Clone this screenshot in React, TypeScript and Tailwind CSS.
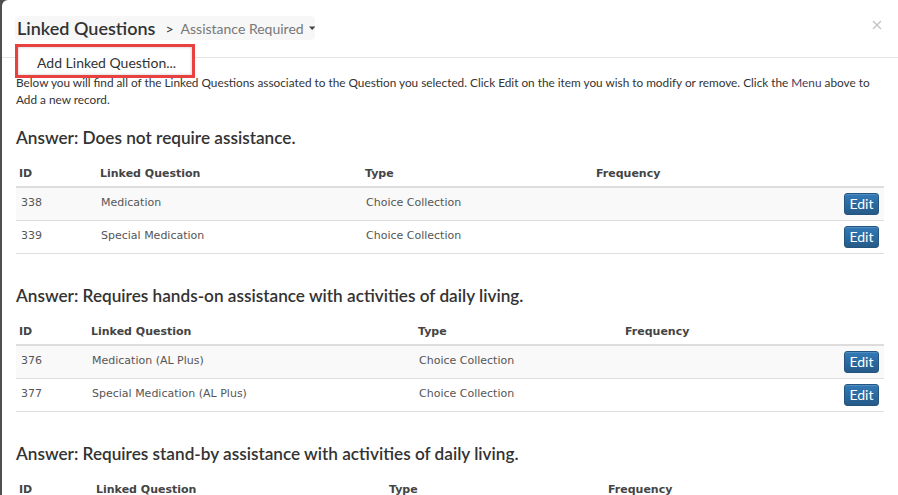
import React from 'react';

interface LinkedRow {
  id: string;
  question: string;
  type: string;
  frequency: string;
}

interface AnswerGroup {
  answer: string;
  // column widths: id, linked question, type
  cols: [string, string, string];
  rows: LinkedRow[];
}

const groups: AnswerGroup[] = [
  {
    answer: 'Answer: Does not require assistance.',
    cols: ['w-[80px]', 'w-[265px]', 'w-[231px]'],
    rows: [
      { id: '338', question: 'Medication', type: 'Choice Collection', frequency: '' },
      { id: '339', question: 'Special Medication', type: 'Choice Collection', frequency: '' },
    ],
  },
  {
    answer: 'Answer: Requires hands-on assistance with activities of daily living.',
    cols: ['w-[71px]', 'w-[327px]', 'w-[207px]'],
    rows: [
      { id: '376', question: 'Medication (AL Plus)', type: 'Choice Collection', frequency: '' },
      { id: '377', question: 'Special Medication (AL Plus)', type: 'Choice Collection', frequency: '' },
    ],
  },
  {
    answer: 'Answer: Requires stand-by assistance with activities of daily living.',
    cols: ['w-[76px]', 'w-[293px]', 'w-[219px]'],
    rows: [
      { id: '382', question: 'Medication (Stand-by)', type: 'Choice Collection', frequency: '' },
      { id: '383', question: 'Special Medication (Stand-by)', type: 'Choice Collection', frequency: '' },
    ],
  },
];

const lato = "font-['Lato','Noto_Sans',sans-serif]";
const verdana = "font-['DejaVu_Sans','Verdana',sans-serif]";

function EditButton() {
  return (
    <button
      className={`${lato} h-[22px] w-[35px] rounded-[3px] border border-[#245580] bg-gradient-to-b from-[#337ab7] to-[#265a88] text-[14px] leading-none text-white shadow-[inset_0_1px_0_rgba(255,255,255,0.15)]`}
    >
      Edit
    </button>
  );
}

function AnswerTable({ group }: { group: AnswerGroup }) {
  const [c1, c2, c3] = group.cols;
  return (
    <section className="mb-[32px]">
      <h3 className={`${lato} whitespace-nowrap text-[17.2px] leading-[20px] font-semibold text-[#333]`}>
        {group.answer}
      </h3>
      <div className="mt-[14px]">
        {/* header */}
        <div
          className={`${verdana} flex h-[26px] items-center whitespace-nowrap border-b-2 border-[#dddddd] text-[11px] font-bold text-[#444]`}
        >
          <div className={`${c1} shrink-0 pl-[3px]`}>ID</div>
          <div className={`${c2} shrink-0 pl-[4px]`}>Linked Question</div>
          <div className={`${c3} shrink-0 pl-[4px]`}>Type</div>
          <div className="flex-1 pl-[4px]">Frequency</div>
          <div className="w-[50px] shrink-0"></div>
        </div>
        {group.rows.map((row, i) => (
          <div
            key={row.id}
            className={`${verdana} flex h-[33px] items-center whitespace-nowrap border-b border-[#dddddd] text-[11px] text-[#555] ${
              i % 2 === 0 ? 'bg-[#f9f9f9]' : 'bg-white'
            }`}
          >
            <div className={`${c1} shrink-0 pb-[2px] pl-[5px]`}>{row.id}</div>
            <div className={`${c2} shrink-0 pb-[2px] pl-[5px]`}>{row.question}</div>
            <div className={`${c3} shrink-0 pb-[2px] pl-[5px]`}>{row.type}</div>
            <div className="flex-1 pl-[5px]">{row.frequency}</div>
            <div className="flex w-[50px] shrink-0 justify-end pr-[5px]">
              <EditButton />
            </div>
          </div>
        ))}
      </div>
    </section>
  );
}

export default function App() {
  return (
    <div className="h-[495px] w-full overflow-hidden bg-[#4f4f4f] pl-[2px]">
      <div className="relative h-full rounded-tl-[6px] bg-white">
        {/* Header */}
        <header className="relative h-[58px] border-b border-[#e5e5e5] pl-[13px] pt-[16px]">
          <div className="flex h-[24px] w-[300px] items-center whitespace-nowrap rounded-[4px] bg-[#f7f7f7] pl-[2px]">
            <h2 className={`${lato} text-[18px] leading-none font-semibold text-[#333]`}>Linked Questions</h2>
            <span className={`${lato} ml-[10px] text-[14px] text-[#333]`}>&gt;</span>
            <span className={`${lato} ml-[7px] text-[14px] text-[#777]`}>Assistance Required</span>
            <svg className="ml-[5px] mt-[1px]" width="8" height="5" viewBox="0 0 8 5">
              <path d="M0 0 L8 0 L4 4.5 Z" fill="#444" />
            </svg>
          </div>
          <button className="absolute right-[16px] top-[20px] p-0" aria-label="Close">
            <svg width="10" height="10" viewBox="0 0 10 10">
              <path d="M1 1 L9 9 M9 1 L1 9" stroke="#c4c4c4" strokeWidth="1.4" />
            </svg>
          </button>
          {/* Dropdown menu, highlighted */}
          <div className="absolute left-[13px] top-[44px] z-10 h-[34px] w-[180px] border-[3px] border-[#e8413f] bg-white">
            <div className="flex h-full items-center whitespace-nowrap bg-white pl-[19px] pt-[3px] shadow-[inset_0_0_3px_rgba(0,0,0,0.25)]">
              <span className={`${lato} text-[14px] text-[#333]`}>Add Linked Question...</span>
            </div>
          </div>
        </header>

        {/* Body */}
        <main className="px-[14px] pt-[16px]">
          <p className={`${lato} text-[11.8px] leading-[17px] text-[#333]`}>
            <span className="whitespace-nowrap">
              Below you will find all of the Linked Questions associated to the Question you selected. Click Edit on the
              item you wish to modify or remove. Click the <span className="text-[#4b3a5e]">Menu</span> above to
            </span>
            <br />
            Add a new record.
          </p>
          <div className="mt-[20px]">
            {groups.map((g) => (
              <AnswerTable key={g.answer} group={g} />
            ))}
          </div>
        </main>
      </div>
    </div>
  );
}
